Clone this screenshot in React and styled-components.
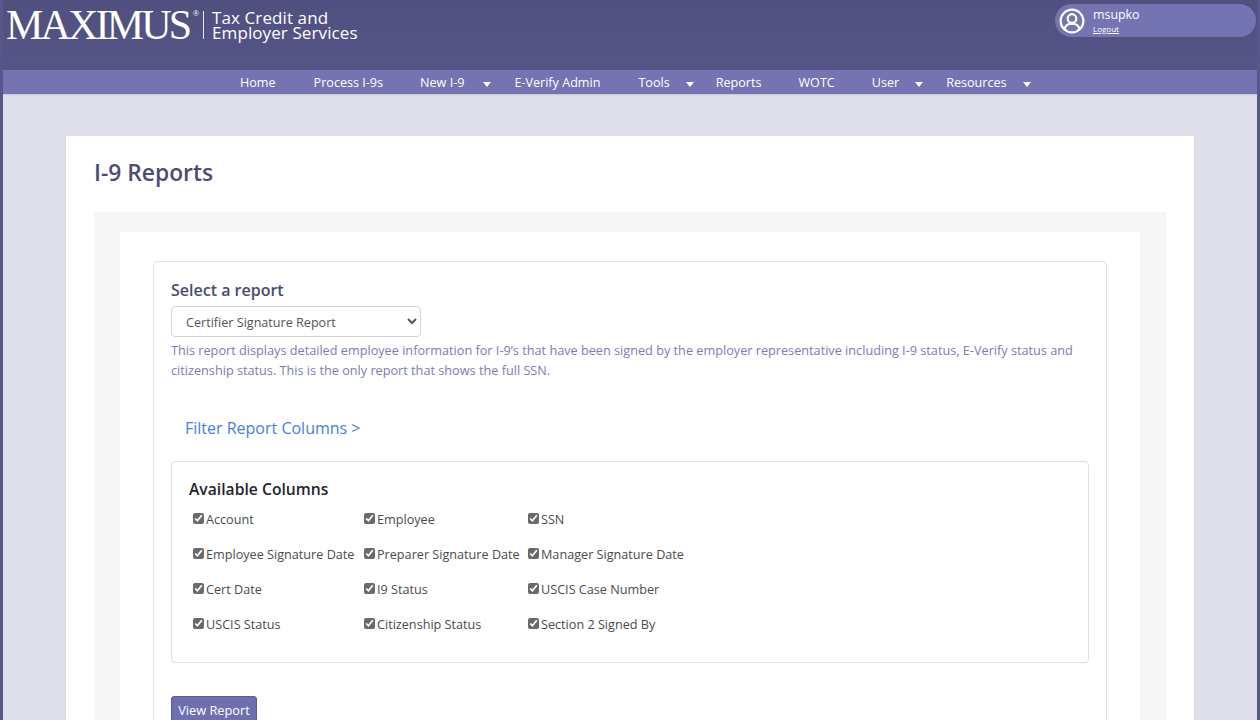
import styled, { createGlobalStyle } from 'styled-components'

const GlobalStyle = createGlobalStyle`
  html, body {
    margin: 0;
    padding: 0;
    height: 720px;
    overflow: hidden;
    background: #dedeeb;
    font-family: "Open Sans", "Noto Sans", "Liberation Sans", sans-serif;
  }
  * { box-sizing: border-box; }
`

const Page = styled.div`
  height: 720px;
  overflow: hidden;
  border-left: 3px solid #56578a;
  border-right: 3px solid #56578a;
  background: #dedeeb;
`

const Header = styled.header`
  height: 70px;
  margin: 0 -3px;
  padding: 0 4px 0 6px;
  display: flex;
  justify-content: space-between;
  align-items: flex-start;
  background: linear-gradient(#4f5080, #555687);
`

const Brand = styled.div`
  display: flex;
  align-items: center;
  height: 50px;
  color: #fff;
`

const Logo = styled.div`
  font-family: "Liberation Serif", serif;
  font-size: 42px;
  letter-spacing: -2.8px;
  line-height: 1;
  width: 198px;
  border-right: 1px solid #e6e6f0;
  height: 28px;
  display: flex;
  align-items: center;
  margin-right: 8px;
  sup {
    font-size: 9px;
    letter-spacing: 0;
    align-self: flex-start;
    margin: -2px 0 0 3px;
  }
`

const Tagline = styled.div`
  font-size: 17px;
  line-height: 15px;
  letter-spacing: .1px;
  margin-top: -1px;
`

const UserPill = styled.div`
  width: 201px;
  height: 33px;
  margin-top: 4px;
  padding-left: 4px;
  display: flex;
  align-items: center;
  gap: 8px;
  color: #fff;
  background: #7374b1;
  border-radius: 17px;
`

const UserText = styled.div`
  display: flex;
  flex-direction: column;
  font-size: 12.4px;
  line-height: 15px;
  a {
    margin-top: 1px;
    color: #fff;
    font-size: 8px;
    line-height: 12px;
    text-decoration: underline;
  }
`

const Nav = styled.nav`
  height: 25px;
  display: flex;
  background: #7374b1;
  border-bottom: 1px solid #c9c9e2;
  color: #fff;
  font-size: 12.6px;
`

const NavItem = styled.div`
  position: relative;
  line-height: 25px;
  margin-left: ${({ $x }) => $x}px;
  padding-right: ${({ $pad }) => $pad || 0}px;
  white-space: nowrap;
  &::after {
    content: ${({ $menu }) => ($menu ? "''" : 'none')};
    position: absolute;
    right: -24px;
    top: 12px;
    border: 4px solid transparent;
    border-top: 5px solid #fff;
    border-bottom: 0;
  }
`

const Sheet = styled.main`
  margin: 41px 63px 0;
  padding: 0 28px;
  background: #fff;
  min-height: 600px;
`

const Title = styled.h1`
  margin: 0;
  padding-top: 21px;
  height: 76px;
  font-size: 22.8px;
  line-height: 32px;
  font-weight: 600;
  color: #4c4d75;
`

const GrayPanel = styled.section`
  padding: 20px 26px 0;
  background: #f6f6f6;
  min-height: 520px;
`

const WhitePanel = styled.div`
  padding: 29px 33px 0;
  background: #fff;
  min-height: 500px;
`

const Card = styled.div`
  padding: 17px 17px 0;
  border: 1px solid #dfdfdf;
  border-radius: 4px;
  min-height: 480px;
`

const CardTitle = styled.h2`
  margin: 0 0 4px;
  font-size: 16px;
  line-height: 23px;
  font-weight: 600;
  color: #4a4b6e;
`

const ReportSelect = styled.select`
  display: block;
  width: 250px;
  height: 31px;
  padding: 2px 10px 0;
  font: 12.6px "Open Sans", "Noto Sans", sans-serif;
  color: #555;
  background: #fff;
  border: 1px solid #d4d4d4;
  border-radius: 4px;
`

const Description = styled.p`
  margin: 3px 0 0;
  font-size: 12.7px;
  line-height: 20px;
  color: #7c7cb2;
`

const FilterLink = styled.a`
  display: block;
  margin: 36px 0 0 14px;
  font-size: 16px;
  line-height: 24px;
  color: #3f82e0;
  text-decoration: none;
`

const ColumnsBox = styled.div`
  height: 202px;
  margin-top: 21px;
  padding: 16px 17px 0;
  border: 1px solid #dfdfdf;
  border-radius: 4px;
`

const ColumnsTitle = styled.h3`
  margin: 0 0 9px;
  font-size: 15.7px;
  line-height: 22px;
  font-weight: 600;
  color: #25252f;
`

const ColumnGrid = styled.div`
  display: grid;
  grid-template-columns: 171px 164px 1fr;
  grid-auto-rows: 35px;
  padding-left: 4px;
`

const ColumnOption = styled.label`
  display: flex;
  align-items: flex-start;
  gap: 2px;
  font-size: 12.65px;
  line-height: 20px;
  color: #4b4b4b;
  white-space: nowrap;
  input {
    width: 11px;
    height: 11px;
    margin: 4px 0 0;
    accent-color: #6a6a6a;
  }
`

const ViewButton = styled.button`
  display: block;
  width: 86px;
  height: 32px;
  margin-top: 33px;
  padding: 0 0 4px;
  font: 12.8px "Open Sans", "Noto Sans", sans-serif;
  color: #fff;
  background: #6e6fae;
  border: 1px solid #5c5d99;
  border-radius: 3px;
`

const navItems = [
  { label: 'Home', x: 237 },
  { label: 'Process I-9s', x: 38 },
  { label: 'New I-9', x: 37, menu: true, pad: 3 },
  { label: 'E-Verify Admin', x: 47 },
  { label: 'Tools', x: 38, menu: true },
  { label: 'Reports', x: 46 },
  { label: 'WOTC', x: 37 },
  { label: 'User', x: 37, menu: true },
  { label: 'Resources', x: 47, menu: true },
]

const columns = [
  'Account', 'Employee', 'SSN',
  'Employee Signature Date', 'Preparer Signature Date', 'Manager Signature Date',
  'Cert Date', 'I9 Status', 'USCIS Case Number',
  'USCIS Status', 'Citizenship Status', 'Section 2 Signed By',
]

function UserIcon() {
  return (
    <svg width="26" height="26" viewBox="0 0 26 26" fill="none" stroke="#fff" strokeWidth="2.2">
      <circle cx="13" cy="13" r="11.4" />
      <circle cx="13" cy="10.5" r="4.3" />
      <path d="M5.6 21.2c.8-3.4 3.2-5 5-5.200h4.800c1.800.2 4.200 1.800 5 5.200" />
    </svg>
  )
}

export default function App() {
  return (
    <Page>
      <GlobalStyle />
      <Header>
        <Brand>
          <Logo>MAXIMUS<sup>®</sup></Logo>
          <Tagline>Tax Credit and<br />Employer Services</Tagline>
        </Brand>
        <UserPill>
          <UserIcon />
          <UserText>
            <span>msupko</span>
            <a href="#logout">Logout</a>
          </UserText>
        </UserPill>
      </Header>
      <Nav>
        {navItems.map(({ label, x, menu, pad }) => (
          <NavItem key={label} $x={x} $menu={menu} $pad={pad}>{label}</NavItem>
        ))}
      </Nav>
      <Sheet>
        <Title>I-9 Reports</Title>
        <GrayPanel>
          <WhitePanel>
            <Card>
              <CardTitle>Select a report</CardTitle>
              <ReportSelect defaultValue="cert">
                <option value="cert">Certifier Signature Report</option>
              </ReportSelect>
              <Description>
                This report displays detailed employee information for I-9’s that have been signed by the employer representative including I-9 status, E-Verify status and citizenship status. This is the only report that shows the full SSN.
              </Description>
              <FilterLink href="#filter">Filter Report Columns &gt;</FilterLink>
              <ColumnsBox>
                <ColumnsTitle>Available Columns</ColumnsTitle>
                <ColumnGrid>
                  {columns.map((name) => (
                    <ColumnOption key={name}>
                      <input type="checkbox" defaultChecked />
                      {name}
                    </ColumnOption>
                  ))}
                </ColumnGrid>
              </ColumnsBox>
              <ViewButton>View Report</ViewButton>
            </Card>
          </WhitePanel>
        </GrayPanel>
      </Sheet>
    </Page>
  )
}
